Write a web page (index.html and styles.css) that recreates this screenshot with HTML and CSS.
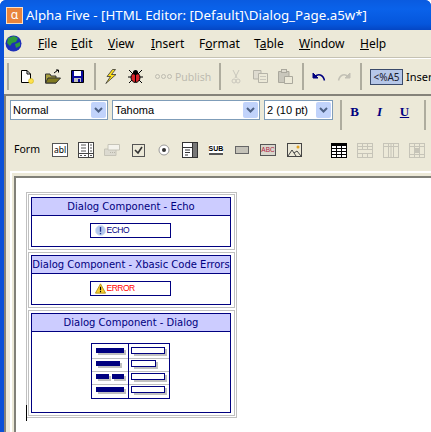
FILE: index.html
```html
<!DOCTYPE html>
<html lang="en">
<head>
    <meta charset="UTF-8">
    <title>Alpha Five - HTML Editor</title>
    <link rel="stylesheet" href="styles.css">
</head>
<body>
    <div class="window">
        <div class="titlebar">
            <span class="app-icon">α</span>
            <span class="title-text">Alpha Five - [HTML Editor: [Default]\Dialog_Page.a5w*]</span>
        </div>
        <div class="client">
            <div class="menubar">
                <svg class="globe" width="17" height="17" viewBox="0 0 17 17">
                    <circle cx="8.500" cy="8.500" r="8" fill="#1c2fb8"/>
                    <path d="M3 3 L9 1 L13 3 L11 7 L7 8 L5 11 L2 8Z M10 9 L15 7 L15 11 L11 13Z" fill="#2f9a3c"/>
                </svg>
                <span class="menu"><u>F</u>ile</span>
                <span class="menu"><u>E</u>dit</span>
                <span class="menu"><u>V</u>iew</span>
                <span class="menu"><u>I</u>nsert</span>
                <span class="menu">F<u>o</u>rmat</span>
                <span class="menu">T<u>a</u>ble</span>
                <span class="menu"><u>W</u>indow</span>
                <span class="menu"><u>H</u>elp</span>
            </div>
            <div class="toolbar main-tools">
                <span class="sep grip"></span>
                <span class="slot"><svg width="15" height="16" viewBox="0 0 15 16"><path d="M1.500 1.500H7L10.500 5V13.500H1.500Z" fill="#fff" stroke="#000"/><path d="M7 1.500V5H10.500" fill="none" stroke="#000"/><circle cx="11" cy="12" r="2.500" fill="#ffe14d" stroke="#c9b000" stroke-width=".5"/></svg></span>
                <span class="slot"><svg width="16" height="15" viewBox="0 0 16 15"><path d="M.5 14V5H5L6 7H11V14Z" fill="#a8a040" stroke="#333"/><path d="M.5 14L3 9H15.500L11 14Z" fill="#807a20" stroke="#333"/><path d="M9 4L13 1M11 1H13.500V3.500" stroke="#000" fill="none"/></svg></span>
                <span class="slot"><svg width="13" height="13" viewBox="0 0 13 13"><path d="M.5.5H12.500V12.500H.5Z" fill="#0a0a9c" stroke="#000"/><rect x="3" y="1" width="7" height="5" fill="#fff"/><rect x="3" y="8" width="7" height="4" fill="#c0c0c0"/><rect x="7" y="9" width="2" height="3" fill="#0a0a9c"/></svg></span>
                <span class="sep"></span>
                <span class="slot"><svg width="12" height="15" viewBox="0 0 12 15"><path d="M7.500.5L2 7.500H5.500L.8 14.500L11 5.500H6.500L10.500.5Z" fill="#ffe11a" stroke="#333" stroke-width=".8"/></svg></span>
                <span class="slot"><svg width="15" height="15" viewBox="0 0 15 15"><path d="M1 1L5 5M14 1L10 5M0 8H15M1 14L4 11M14 14L11 11" stroke="#000"/><ellipse cx="7.500" cy="8.500" rx="4.500" ry="5" fill="#d8232a" stroke="#000"/><circle cx="7.500" cy="3.500" r="2.500" fill="#000"/><path d="M7.500 4V13" stroke="#000"/></svg></span>
                <span class="publish"><span class="dots"><i></i><i></i><i></i></span>Publish</span>
                <span class="sep"></span>
                <span class="slot"><svg width="10" height="15" viewBox="0 0 10 15"><path d="M2 1L6 9M8 1L4 9" stroke="#c9c7bc" fill="none"/><circle cx="3" cy="12" r="2" fill="none" stroke="#c9c7bc"/><circle cx="7" cy="12" r="2" fill="none" stroke="#c9c7bc"/></svg></span>
                <span class="slot"><svg width="15" height="13" viewBox="0 0 15 13"><path d="M.5.5H8V9H.5Z" fill="#dedbd0" stroke="#b5b3a8"/><path d="M5.500 3.500H14.500V12.500H5.500Z" fill="#ece9d8" stroke="#b5b3a8"/><path d="M7 6.500H13M7 9.500H13" stroke="#c9c7bc"/></svg></span>
                <span class="slot"><svg width="15" height="15" viewBox="0 0 15 15"><path d="M.5 2.500H11V13.500H.5Z" fill="#c9c7bc" stroke="#aaa89d"/><rect x="3.500" y=".5" width="5" height="3" fill="#dedbd0" stroke="#aaa89d"/><path d="M6.500 7.500H14.500V14.500H6.500Z" fill="#ece9d8" stroke="#aaa89d"/></svg></span>
                <span class="sep"></span>
                <span class="slot"><svg width="14" height="10" viewBox="0 0 14 10"><path d="M1 1V6H6L1 1Z" fill="#00007f" stroke="#00007f"/><path d="M3 4.500C6 1.500 11 2 12.500 8.500" fill="none" stroke="#00007f" stroke-width="1.500"/></svg></span>
                <span class="slot"><svg width="14" height="10" viewBox="0 0 14 10"><path d="M13 1V6H8L13 1Z" fill="#c2c0b5" stroke="#c2c0b5"/><path d="M11 4.500C8 1.500 3 2 1.500 8.500" fill="none" stroke="#c2c0b5" stroke-width="1.500"/></svg></span>
                <span class="sep"></span>
                <span class="tag-btn">&lt;%A5</span>
                <span class="insert-label">Insert</span>
            </div>
            <div class="mdi">
                <div class="toolbar format-tools">
                    <span class="combo combo-style">Normal<span class="combo-arrow"><svg width="9" height="6" viewBox="0 0 9 6"><path d="M1 1L4.500 4.500L8 1" fill="none" stroke="#4d6185" stroke-width="2"/></svg></span></span>
                    <span class="combo combo-font">Tahoma<span class="combo-arrow"><svg width="9" height="6" viewBox="0 0 9 6"><path d="M1 1L4.500 4.500L8 1" fill="none" stroke="#4d6185" stroke-width="2"/></svg></span></span>
                    <span class="combo combo-size">2 (10 pt)<span class="combo-arrow"><svg width="9" height="6" viewBox="0 0 9 6"><path d="M1 1L4.500 4.500L8 1" fill="none" stroke="#4d6185" stroke-width="2"/></svg></span></span>
                    <span class="sep"></span>
                    <span class="fmt fmt-b">B</span>
                    <span class="fmt fmt-i">I</span>
                    <span class="fmt fmt-u">U</span>
                    <span class="sep"></span>
                </div>
                <div class="toolbar form-tools">
                    <span class="form-label">Form</span>
                    <span class="slot"><span class="fi-box">abl</span></span>
                    <span class="slot"><svg width="16" height="16" viewBox="0 0 16 16"><rect x=".5" y=".5" width="15" height="15" fill="#fff" stroke="#444"/><path d="M10.500 1V15M1 11.500H15" stroke="#444"/><path d="M3 3H8M3 6H8M3 9H8M12 3H14M12 6H14M12 9H14" stroke="#555"/><path d="M2 13.500H4M6 13.500H8M10 13.500H11M12 13.500H14" stroke="#555"/></svg></span>
                    <span class="slot"><svg width="16" height="12" viewBox="0 0 16 12"><path d="M.5 5H12V11.500H.5Z" fill="#dcdad0" stroke="#c6c4b8"/><path d="M4 .5H15.500V6H4Z" fill="#f4f3ec" stroke="#c6c4b8"/><path d="M6 8.500H11" stroke="#b8b6aa" stroke-dasharray="1 1"/></svg></span>
                    <span class="slot"><svg width="13" height="13" viewBox="0 0 13 13"><rect x=".5" y=".5" width="12" height="12" fill="#ece9d8" stroke="#555"/><path d="M3 6L6 9L10 3" fill="none" stroke="#333" stroke-width="1.600"/></svg></span>
                    <span class="slot"><svg width="12" height="12" viewBox="0 0 12 12"><circle cx="6" cy="6" r="5" fill="#fff" stroke="#999"/><circle cx="6" cy="6" r="2" fill="#333"/></svg></span>
                    <span class="slot"><svg width="16" height="16" viewBox="0 0 16 16"><rect x=".5" y=".5" width="15" height="15" fill="#fff" stroke="#333"/><path d="M1 5.500H10M3 8H8M3 10.500H8M3 13H6" stroke="#333"/><rect x="10" y="1" width="5" height="14" fill="#777"/><path d="M10.500 1V15" stroke="#333"/></svg></span>
                    <span class="slot"><span class="fi-sub">SUB</span></span>
                    <span class="slot"><svg width="14" height="8" viewBox="0 0 14 8"><rect x=".5" y=".5" width="13" height="7" fill="#c4c2b8" stroke="#666"/></svg></span>
                    <span class="slot"><span class="fi-abc">ABC</span></span>
                    <span class="slot"><svg width="15" height="14" viewBox="0 0 15 14"><rect x=".5" y=".5" width="14" height="13" fill="#ece9d8" stroke="#444"/><path d="M1 13L5 7L9 13M7 10L10 8L14 13" fill="none" stroke="#444"/><circle cx="11" cy="4" r="1.500" fill="#e0a020"/></svg></span>
                    <span class="tbl-gap"></span>
                    <span class="slot"><svg width="16" height="15" viewBox="0 0 16 15"><rect x=".5" y=".5" width="15" height="14" fill="#fff" stroke="#000"/><rect x="1" y="1" width="14" height="2" fill="#000"/><path d="M1 5.500H15M1 8.500H15M1 11.500H15M5.500 1V14M10.500 1V14" stroke="#000"/></svg></span>
                    <span class="slot"><svg width="16" height="15" viewBox="0 0 16 15"><rect x=".5" y=".5" width="15" height="14" fill="#ece9d8" stroke="#c6c4b8"/><path d="M1 3.500H15M1 6.500H15M1 10.500H15M5.500 1V6M10.500 1V6M5.500 11V14M10.500 11V14" stroke="#c6c4b8"/></svg></span>
                    <span class="slot"><svg width="16" height="15" viewBox="0 0 16 15"><rect x=".5" y=".5" width="15" height="14" fill="#ece9d8" stroke="#c6c4b8"/><path d="M5.500 1V14M8 1V14M10.500 1V14M1 3.500H15" stroke="#c6c4b8"/></svg></span>
                    <span class="slot"><svg width="16" height="15" viewBox="0 0 16 15"><rect x=".5" y=".5" width="15" height="14" fill="#ece9d8" stroke="#c6c4b8"/><path d="M1 3.500H15M1 11.500H15M5.500 1V14M10.500 1V14" stroke="#c6c4b8"/><rect x="6" y="5" width="4" height="5" fill="#c6c4b8"/></svg></span>
                </div>
                <div class="editor">
                    <div class="page">
                        <div class="outer">
                            <div class="cell">
                                <div class="comp">
                                    <div class="comp-head">Dialog Component - Echo</div>
                                    <div class="comp-body body-echo">
                                        <div class="ctl-box">
                                            <svg width="11" height="11" viewBox="0 0 13 13"><circle cx="6.500" cy="6.500" r="6" fill="#b4c8ee" stroke="#d5dff4"/><path d="M6.500 2.500V8M6.500 9.500V11" stroke="#20308f" stroke-width="1.600"/></svg>
                                            <span class="ctl-echo">ECHO</span>
                                        </div>
                                    </div>
                                </div>
                            </div>
                            <div class="cell">
                                <div class="comp">
                                    <div class="comp-head">Dialog Component - Xbasic Code Errors</div>
                                    <div class="comp-body body-echo">
                                        <div class="ctl-box">
                                            <svg width="11" height="11" viewBox="0 0 13 12"><path d="M6.500 .5L12.500 11.500H.5Z" fill="#f7cf2f" stroke="#b08a10"/><path d="M6.500 4V8M6.500 9V10.500" stroke="#000" stroke-width="1.400"/></svg>
                                            <span class="ctl-error">ERROR</span>
                                        </div>
                                    </div>
                                </div>
                            </div>
                            <div class="cell">
                                <div class="comp">
                                    <div class="comp-head">Dialog Component - Dialog</div>
                                    <div class="comp-body body-dialog">
                                        <svg width="79" height="56" viewBox="0 0 79 56">
                                            <rect x=".5" y=".5" width="78" height="55" fill="#fff" stroke="#000080"/>
                                            <path d="M1 15.500H78M1 28.500H78M1 41.500H78" stroke="#c0c0c0"/>
                                            <path d="M37.500 1V55" stroke="#000080"/>
                                            <g fill="#c0c0c0">
                                                <rect x="7" y="7" width="28" height="5"/>
                                                <rect x="7" y="20" width="24" height="5"/>
                                                <rect x="7" y="33" width="13" height="5"/>
                                                <rect x="23" y="33" width="12" height="5"/>
                                                <rect x="7" y="46" width="28" height="5"/>
                                                <rect x="43" y="6" width="33" height="7"/>
                                                <rect x="43" y="19" width="24" height="7"/>
                                                <rect x="43" y="32" width="33" height="7"/>
                                                <rect x="43" y="45" width="33" height="7"/>
                                            </g>
                                            <g fill="#000080">
                                                <rect x="5" y="5" width="28" height="5"/>
                                                <rect x="5" y="18" width="24" height="5"/>
                                                <rect x="5" y="31" width="13" height="5"/>
                                                <rect x="21" y="31" width="12" height="5"/>
                                                <rect x="5" y="44" width="28" height="5"/>
                                            </g>
                                            <g fill="#fff" stroke="#000080">
                                                <rect x="40.500" y="4.500" width="33" height="6"/>
                                                <rect x="40.500" y="17.500" width="24" height="6"/>
                                                <rect x="40.500" y="30.500" width="33" height="6"/>
                                                <rect x="40.500" y="43.500" width="33" height="6"/>
                                            </g>
                                        </svg>
                                    </div>
                                </div>
                            </div>
                        </div>
                        <span class="caret"></span>
                    </div>
                </div>
            </div>
        </div>
    </div>
</body>
</html>
```

FILE: styles.css
```css
html, body {
    margin: 0;
    padding: 0;
}

body {
    width: 431px;
    height: 432px;
    overflow: hidden;
    background: #fff;
    font-family: "Noto Sans", sans-serif;
    font-size: 12px;
    color: #000;
}

.window {
    height: 432px;
    display: flex;
    flex-direction: column;
    background: #0a50d8;
    border-radius: 6px 6px 0 0;
    overflow: hidden;
}

.titlebar {
    height: 30px;
    flex-shrink: 0;
    display: flex;
    align-items: center;
    gap: 3px;
    padding-left: 6px;
    box-sizing: border-box;
    background: linear-gradient(#0a5be0, #0a62ea 30%, #0556dc 80%, #0446c4);
    color: #fff;
    font-size: 13.3px;
    white-space: nowrap;
}

.app-icon {
    width: 15px;
    height: 15px;
    background: #e8843c;
    border: 1px solid #ffe0c0;
    color: #fff;
    font-size: 12px;
    line-height: 14px;
    text-align: center;
    flex-shrink: 0;
}

.client {
    flex: 1;
    margin-left: 4px;
    background: #ece9d8;
    display: flex;
    flex-direction: column;
    min-height: 0;
}

/* menu columns follow the reference's item starts */
.menubar {
    height: 27px;
    box-sizing: border-box;
    margin-top: 1px;
    padding-bottom: 2px;
    flex-shrink: 0;
    display: grid;
    grid-template-columns: 34px 33px 37px 43px 48px 55px 45px 61px auto;
    align-items: center;
    border-bottom: 1px solid #c5c2b3;
    white-space: nowrap;
}

.globe {
    margin-left: 1px;
}

.toolbar {
    display: flex;
    flex-shrink: 0;
    align-items: center;
    white-space: nowrap;
    overflow: hidden;
}

.slot {
    width: 25px;
    flex-shrink: 0;
    display: flex;
    justify-content: center;
    align-items: center;
}

.sep {
    width: 2px;
    height: 27px;
    background: #aeac9e;
    flex-shrink: 0;
    margin: 0 2px 0 4px;
}

.main-tools {
    height: 36px;
    box-sizing: border-box;
    border-top: 1px solid #fff;
}

.grip {
    margin-left: 3px;
    margin-right: 6px;
}

.publish {
    width: 67px;
    flex-shrink: 0;
    padding-left: 7px;
    box-sizing: border-box;
    color: #bdbbb0;
    font-size: 10.5px;
    display: flex;
    align-items: center;
    gap: 3px;
}

.dots {
    display: flex;
    gap: 1px;
}

.dots i {
    box-sizing: border-box;
    width: 5px;
    height: 5px;
    border: 1px solid #bdbbb0;
    border-radius: 50%;
}

.tag-btn {
    margin-left: 6px;
    box-sizing: border-box;
    width: 33px;
    height: 16px;
    line-height: 14px;
    background: #b6c7e8;
    border: 1px solid #3a4a6a;
    font-size: 10px;
    text-align: center;
    color: #1a2030;
    flex-shrink: 0;
}

.insert-label {
    margin-left: 3px;
    font-size: 11px;
}

.mdi {
    flex: 1;
    min-height: 0;
    display: flex;
    flex-direction: column;
    border-top: 2px solid #85837a;
    border-left: 2px solid #85837a;
}

.format-tools {
    height: 34px;
    box-sizing: border-box;
    padding: 4px 0 0 4px;
    align-items: flex-start;
}

.combo {
    height: 20px;
    box-sizing: border-box;
    background: #fff;
    border: 1px solid #7f9db9;
    display: flex;
    align-items: center;
    justify-content: space-between;
    padding-left: 2px;
    font-family: "Liberation Sans", sans-serif;
    font-size: 11px;
    flex-shrink: 0;
}

.combo-style {
    width: 98px;
}

.combo-font {
    width: 148px;
    margin-left: 4px;
}

.combo-size {
    width: 69px;
    margin-left: 4px;
}

.combo-arrow {
    width: 15px;
    height: 16px;
    margin-right: 1px;
    background: #c1d3fb;
    border-radius: 2px;
    display: flex;
    align-items: center;
    justify-content: center;
}

.format-tools .sep {
    height: 30px;
    margin: 0 0 0 7px;
}

.fmt {
    width: 25px;
    margin-top: 4px;
    text-align: center;
    color: #00007f;
    font-family: "Liberation Serif", serif;
    font-size: 13px;
    font-weight: 700;
    flex-shrink: 0;
}

.fmt-i {
    font-style: italic;
}

.fmt-u {
    text-decoration: underline;
}

.form-tools {
    height: 41px;
    padding-left: 8px;
    padding-bottom: 1px;
    box-sizing: border-box;
}

.form-label {
    width: 33px;
    margin-bottom: 3px;
    flex-shrink: 0;
    font-size: 10.5px;
}

.form-tools .slot {
    width: 26px;
}

.fi-box {
    box-sizing: border-box;
    width: 16px;
    height: 14px;
    background: #fff;
    border: 1px solid #555;
    font-size: 8.5px;
    line-height: 11px;
    text-align: center;
}

.fi-sub {
    font-family: "Liberation Sans", sans-serif;
    font-size: 7px;
    font-weight: 700;
    background: #fff;
    border-bottom: 2px solid #555;
    line-height: 8px;
}

.fi-abc {
    box-sizing: border-box;
    width: 16px;
    height: 12px;
    border: 1px solid #555;
    background: #d8d6cc;
    color: #b02040;
    font-family: "Liberation Sans", sans-serif;
    font-size: 6.5px;
    line-height: 10px;
    text-align: center;
}

.tbl-gap {
    width: 19px;
    flex-shrink: 0;
}

.editor {
    flex: 1;
    min-height: 0;
    margin-left: 4px;
    border-top: 2px solid #fff;
    border-left: 2px solid #fff;
    padding: 3px 0 0 2px;
    background: #ece9d8;
}

.page {
    height: 100%;
    box-sizing: border-box;
    background: #fff;
    border-top: 2px solid #808078;
    border-left: 2px solid #808078;
    padding: 14px 0 0 10px;
    position: relative;
}

.outer {
    box-sizing: border-box;
    width: 211px;
    padding: 1px;
    border: 1px solid #c0c0c0;
    display: flex;
    flex-direction: column;
    gap: 2px;
}

.cell {
    border: 1px solid #c0c0c0;
    padding: 2px 3px 2px 2px;
}

.comp {
    border: 1px solid #000080;
}

.comp-head {
    height: 18px;
    box-sizing: border-box;
    line-height: 17px;
    background: #ccccff;
    color: #000080;
    border-bottom: 1px solid #000080;
    text-align: center;
    font-family: "DejaVu Sans", sans-serif;
    font-size: 10px;
    white-space: nowrap;
}

.comp-body {
    box-sizing: border-box;
    padding: 0 2px 2px 0;
    display: flex;
    justify-content: center;
    align-items: center;
}

.body-echo {
    height: 30px;
}

.body-dialog {
    height: 80px;
}

.ctl-box {
    box-sizing: border-box;
    width: 81px;
    height: 15px;
    border: 1px solid #000080;
    display: flex;
    align-items: center;
    gap: 1px;
    padding-left: 4px;
    font-family: "Liberation Sans", sans-serif;
    font-size: 8.5px;
    letter-spacing: -0.5px;
}

.ctl-echo {
    color: #000080;
}

.ctl-error {
    color: #ff0000;
}

.caret {
    position: absolute;
    left: 10px;
    top: 227px;
    width: 1px;
    height: 16px;
    background: #000;
}
```
